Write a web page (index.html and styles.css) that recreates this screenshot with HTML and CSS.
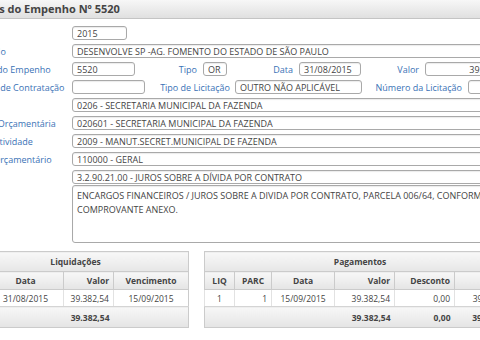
FILE: index.html
```html
<!DOCTYPE html>
<html lang="pt-BR">
<head>
	<meta charset="UTF-8">
	<meta name="viewport" content="width=device-width, initial-scale=1.0">
	<title>Detalhes do Empenho</title>
	<link rel="stylesheet" href="styles.css">
</head>

<body>

	<div class="topbar">
		<h1>Detalhes do Empenho Nº 5520</h1>
	</div>

	<div class="page">
		<div class="form">
			<div class="row">
				<label>Ano</label>
				<input class="field w-year" type="text" value="2015" readonly>
			</div>
			<div class="row">
				<label>Favorecido</label>
				<input class="field grow" type="text" value="DESENVOLVE SP -AG. FOMENTO DO ESTADO DE SÃO PAULO" readonly>
			</div>
			<div class="row">
				<label>Número do Empenho</label>
				<input class="field w-num" type="text" value="5520" readonly>
				<span class="sub s-tipo">Tipo</span>
				<input class="field w-tipo" type="text" value="OR" readonly>
				<span class="sub s-data">Data</span>
				<input class="field w-data" type="text" value="31/08/2015" readonly>
				<span class="sub s-valor">Valor</span>
				<input class="field w-valor" type="text" value="39.382,54" readonly>
			</div>
			<div class="row">
				<label>Processo de Contratação</label>
				<input class="field w-modal" type="text" value="" readonly>
				<span class="sub s-tlic">Tipo de Licitação</span>
				<input class="field w-tlic" type="text" value="OUTRO NÃO APLICÁVEL" readonly>
				<span class="sub s-nlic">Número da Licitação</span>
				<input class="field w-nlic" type="text" value="" readonly>
			</div>
			<div class="row">
				<label>Órgão</label>
				<input class="field grow" type="text" value="0206 - SECRETARIA MUNICIPAL DA FAZENDA" readonly>
			</div>
			<div class="row">
				<label>Unidade Orçamentária</label>
				<input class="field grow" type="text" value="020601 - SECRETARIA MUNICIPAL DA FAZENDA" readonly>
			</div>
			<div class="row">
				<label>Projeto/Atividade</label>
				<input class="field grow" type="text" value="2009 - MANUT.SECRET.MUNICIPAL DE FAZENDA" readonly>
			</div>
			<div class="row">
				<label>Crédito Orçamentário</label>
				<input class="field grow" type="text" value="110000 - GERAL" readonly>
			</div>
			<div class="row">
				<label>Despesa</label>
				<input class="field grow" type="text" value="3.2.90.21.00 - JUROS SOBRE A DÍVIDA POR CONTRATO" readonly>
			</div>
			<div class="row row-memo">
				<label>Objeto</label>
				<textarea class="field memo" readonly>ENCARGOS FINANCEIROS / JUROS SOBRE A DIVIDA POR CONTRATO, PARCELA 006/64, CONFORME COMPROVANTE ANEXO.</textarea>
			</div>
		</div>

		<div class="tables">
			<table class="grid liq">
				<colgroup>
					<col style="width: 25px">
					<col style="width: 76px">
					<col style="width: 50px">
					<col style="width: 75px">
				</colgroup>
				<thead>
					<tr class="caption"><th colspan="4">Liquidações</th></tr>
					<tr class="heads">
						<th>Nº</th>
						<th>Data</th>
						<th class="num">Valor</th>
						<th>Vencimento</th>
					</tr>
				</thead>
				<tbody>
					<tr>
						<td class="center">1</td>
						<td class="center">31/08/2015</td>
						<td class="num">39.382,54</td>
						<td class="center">15/09/2015</td>
					</tr>
				</tbody>
				<tfoot>
					<tr>
						<td></td>
						<td></td>
						<td class="num">39.382,54</td>
						<td></td>
					</tr>
				</tfoot>
			</table>

			<table class="grid pag">
				<colgroup>
					<col style="width: 30px">
					<col style="width: 37px">
					<col style="width: 63px">
					<col style="width: 60px">
					<col style="width: 60px">
					<col style="width: 61px">
				</colgroup>
				<thead>
					<tr class="caption"><th colspan="6">Pagamentos</th></tr>
					<tr class="heads">
						<th>LIQ</th>
						<th>PARC</th>
						<th>Data</th>
						<th class="num">Valor</th>
						<th class="num">Desconto</th>
						<th class="num">Pago</th>
					</tr>
				</thead>
				<tbody>
					<tr>
						<td class="center">1</td>
						<td class="num">1</td>
						<td class="center">15/09/2015</td>
						<td class="num">39.382,54</td>
						<td class="num">0,00</td>
						<td class="num">39.382,54</td>
					</tr>
				</tbody>
				<tfoot>
					<tr>
						<td></td>
						<td></td>
						<td></td>
						<td class="num">39.382,54</td>
						<td class="num">0,00</td>
						<td class="num">39.382,54</td>
					</tr>
				</tfoot>
			</table>
		</div>
	</div>

</body>
</html>
```

FILE: styles.css
```css
body {
	margin: 0;
	width: 480px;
	height: 340px;
	overflow: hidden;
	font-family: 'Open Sans', 'Noto Sans', sans-serif;
	font-size: 9px;
	color: #444;
	background: #fff;
}

.topbar {
	height: 18px;
	border-bottom: 1px solid #c4c4c4;
	background: linear-gradient(#f7f7f7, #e0e0e0);
	overflow: hidden;
	white-space: nowrap;
}

.topbar h1 {
	margin: 0 0 0 -44px;
	font-size: 11px;
	font-weight: bold;
	line-height: 18px;
	color: #444;
}

.page {
	margin-left: -40px;
	width: 620px;
}

.form {
	display: flex;
	flex-direction: column;
	gap: 4px;
	padding-top: 7px;
}

.row {
	display: flex;
	align-items: center;
	height: 14px;
	white-space: nowrap;
}

.row > label {
	flex: none;
	width: 112px;
	color: #3a72b6;
}

/* labels in the middle of a row sit right-aligned against their field */
.sub {
	flex: none;
	box-sizing: border-box;
	padding-right: 6px;
	text-align: right;
	color: #3a72b6;
}

.field {
	flex: none;
	box-sizing: border-box;
	height: 14px;
	padding: 0 4px;
	border: 1px solid #a9a9a9;
	border-radius: 3px;
	background: #fff;
	box-shadow: inset 0 1px 1px rgba(0, 0, 0, 0.08);
	font: inherit;
	color: #444;
	outline: none;
}

.grow {
	flex: 1;
}

.w-year { width: 55px; }
.w-num { width: 63px; }
.w-tipo { width: 24px; }
.w-data { width: 62px; }
.w-valor { width: 90px; text-align: right; }
.w-modal { width: 73px; }
.w-tlic { width: 127px; }
.w-nlic { width: 100px; }

.s-tipo { width: 68px; }
.s-data { width: 72px; }
.s-valor { width: 64px; }
.s-tlic { width: 90px; padding-right: 5px; }
.s-nlic { width: 106px; }

.row-memo {
	height: auto;
	align-items: flex-start;
	margin-top: -3px;
}

.memo {
	width: 450px;
	height: 58px;
	padding: 3px 4px;
	line-height: 14px;
	resize: none;
	overflow: hidden;
	white-space: normal;
}

.tables {
	display: flex;
	gap: 15px;
	margin: 8px 0 0 2px;
	align-items: flex-start;
}

.grid {
	border-collapse: collapse;
	table-layout: fixed;
	font-size: 8.5px;
	color: #444;
	border: 1px solid #cbcbcb;
}

.liq { width: 226px; }
.pag { width: 311px; }

.grid th,
.grid td {
	padding: 0 4px;
	white-space: nowrap;
	overflow: hidden;
}

.grid .caption th {
	height: 19px;
	background: linear-gradient(#f8f8f8, #e6e6e6);
	border-bottom: 1px solid #cbcbcb;
	text-align: center;
}

.grid .heads th {
	height: 17px;
	background: linear-gradient(#f7f7f7, #e5e5e5);
	border: 1px solid #cbcbcb;
	border-top: none;
	text-align: center;
}

.grid tbody td {
	height: 16px;
	border-left: 1px solid #e2e2e2;
	border-bottom: 1px solid #d4d4d4;
	background: #fff;
}

.grid tfoot td {
	height: 20px;
	font-weight: bold;
	background: linear-gradient(#f7f7f7, #e4e4e4);
}

.grid .center { text-align: center; }
.grid .num,
.grid .heads .num { text-align: right; }
```
